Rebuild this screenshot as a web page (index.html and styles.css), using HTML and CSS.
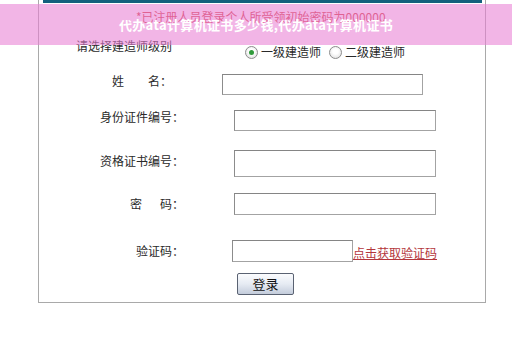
FILE: index.html
```html
<!DOCTYPE html>
<html lang="zh-CN">
<head>
<meta charset="utf-8">
<title>登录</title>
<link rel="stylesheet" href="styles.css">
</head>
<body>
<div class="frame">
  <div class="topbar"></div>
  <div class="notice">*已注册人员登录个人所受领初始密码为000000</div>
  <div class="sel-row">
    <span class="sel-label">请选择建造师级别</span>
    <div class="radios">
      <span class="radio checked"></span><span class="rtext">一级建造师</span>
      <span class="radio"></span><span class="rtext">二级建造师</span>
    </div>
  </div>
  <div class="row row-name">
    <span class="label label-name lab-up">姓　　名：</span>
    <span class="input input-name"></span>
  </div>
  <div class="row row-id">
    <span class="label lab-up">身份证件编号：</span>
    <span class="input"></span>
  </div>
  <div class="row row-cert">
    <span class="label lab-up2">资格证书编号：</span>
    <span class="input input-tall"></span>
  </div>
  <div class="row row-pwd">
    <span class="label">密<span class="gap"></span>码：</span>
    <span class="input input-pwd"></span>
  </div>
  <div class="row row-code">
    <span class="label">验证码：</span>
    <span class="input input-code"></span>
    <a class="code-link" href="#">点击获取验证码</a>
  </div>
  <div class="btn-row">
    <span class="btn">登录</span>
  </div>
</div>
<div class="banner">代办ata计算机证书多少钱,代办ata计算机证书</div>
</body>
</html>
```
FILE: styles.css
```css
html, body {
  margin: 0;
  padding: 0;
  background: #ffffff;
}
body {
  width: 512px;
  height: 340px;
  overflow: hidden;
  position: relative;
  font-family: "Noto Sans CJK SC", "Noto Sans", sans-serif;
  font-size: 12px;
  color: #2a2a2a;
}
.frame {
  margin-left: 38px;
  width: 448px;
  box-sizing: border-box;
  border-left: 1px solid #a9a9a9;
  border-right: 1px solid #a9a9a9;
  border-bottom: 1px solid #a9a9a9;
  padding-bottom: 7px;
}
.topbar {
  height: 3px;
  margin: 0 3px 0 4px;
  background: #14607e;
}
.notice {
  margin-top: 6px;
  line-height: 16px;
  padding-left: 97px;
  color: #d23a3a;
}
.sel-row {
  display: flex;
  align-items: flex-start;
  margin-top: 13px;
  height: 22px;
  padding-left: 37px;
}
.sel-label {
  line-height: 16px;
  width: 169px;
}
.radios {
  display: flex;
  align-items: center;
  margin-top: 6px;
  line-height: 16px;
}
.radio {
  width: 11px;
  height: 11px;
  border: 1px solid #8c8c8c;
  border-radius: 50%;
  background: radial-gradient(circle at 50% 40%, #ffffff 30%, #d8d8d8 100%);
  position: relative;
  margin-right: 3px;
}
.radio.checked::after {
  content: "";
  position: absolute;
  left: 3px;
  top: 3px;
  width: 5px;
  height: 5px;
  border-radius: 50%;
  background: #2f9a3a;
}
.rtext {
  margin-right: 8px;
}
.row {
  display: flex;
  align-items: center;
}
.label {
  text-align: right;
  width: 145px;
  line-height: 16px;
  white-space: nowrap;
}
.label-name {
  width: 133px;
}
.lab-up {
  margin-bottom: 7px;
}
.lab-up2 {
  margin-bottom: 5px;
}
.gap {
  display: inline-block;
  width: 18px;
}
.input {
  display: block;
  box-sizing: border-box;
  margin-left: 50px;
  width: 202px;
  height: 21px;
  background: #fff;
  border: 1px solid #a3a3a3;
  border-top-color: #858585;
  border-left-color: #8c8c8c;
}
.input-name {
  width: 201px;
}
.input-tall {
  height: 27px;
}
.input-pwd {
  height: 22px;
}
.input-code {
  margin-left: 48px;
  width: 121px;
  height: 22px;
}
.row-name {
  margin-top: 13px;
}
.row-id {
  margin-top: 13px;
}
.row-cert {
  margin-top: 18px;
}
.row-pwd {
  margin-top: 16px;
}
.row-code {
  margin-top: 25px;
}
.code-link {
  color: #b4363c;
  text-decoration: underline;
  line-height: 16px;
  margin-top: 4px;
}
.btn-row {
  display: flex;
  margin-top: 11px;
  padding-left: 198px;
}
.btn {
  box-sizing: border-box;
  width: 57px;
  height: 22px;
  border: 1px solid #5a6272;
  border-radius: 2px;
  background: linear-gradient(#fbfcfe, #e6ebf3 50%, #c3ccdb);
  text-align: center;
  font-size: 13px;
  line-height: 19px;
  color: #111;
}
.banner {
  position: absolute;
  left: 0;
  top: 4px;
  width: 512px;
  height: 41px;
  background: rgba(232, 128, 212, 0.58);
  color: #ffffff;
  font-weight: bold;
  font-size: 13px;
  letter-spacing: 0.35px;
  line-height: 41px;
  text-align: center;
  box-sizing: border-box;
}
```
